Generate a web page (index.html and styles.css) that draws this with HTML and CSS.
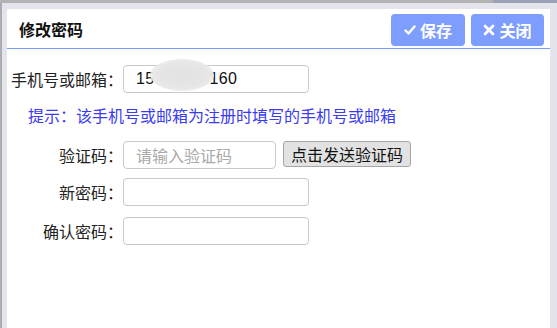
FILE: index.html
```html
<!DOCTYPE html>
<html lang="zh-CN">
<head>
<meta charset="utf-8">
<title>修改密码</title>
<link rel="stylesheet" href="styles.css">
</head>
<body>
<div class="topbar"><div class="tb-left"></div><div class="tb-right"></div></div>
<div class="frame">
  <div class="panel">
    <div class="header">
      <div class="title">修改密码</div>
      <div class="actions">
        <button class="btn"><svg class="ico" viewBox="0 0 12 12" width="12" height="12"><path d="M1.5 6.5 L4.5 9.5 L10.5 2.5" fill="none" stroke="#fff" stroke-width="2.4" stroke-linecap="round" stroke-linejoin="round"/></svg>保存</button>
        <button class="btn"><svg class="ico" viewBox="0 0 12 12" width="12" height="12"><path d="M2 2 L10 10 M10 2 L2 10" fill="none" stroke="#fff" stroke-width="2.8" stroke-linecap="round"/></svg>关闭</button>
      </div>
    </div>
    <div class="form">
      <div class="row">
        <label class="lbl">手机号或邮箱<span class="colon">：</span></label>
        <div class="field">
          <div class="input value">15<span class="mid">000000</span>160</div>
          <span class="blob"></span>
        </div>
      </div>
      <div class="hint">提示<span class="colon">：</span>该手机号或邮箱为注册时填写的手机号或邮箱</div>
      <div class="row r-code">
        <label class="lbl">验证码<span class="colon">：</span></label>
        <div class="input short placeholder">请输入验证码</div>
        <button class="send">点击发送验证码</button>
      </div>
      <div class="row r-new">
        <label class="lbl">新密码<span class="colon">：</span></label>
        <div class="input"></div>
      </div>
      <div class="row r-confirm">
        <label class="lbl">确认密码<span class="colon">：</span></label>
        <div class="input"></div>
      </div>
    </div>
  </div>
</div>
</body>
</html>
```
FILE: styles.css
```css
html, body {
  margin: 0;
  padding: 0;
}
body {
  width: 557px;
  height: 328px;
  overflow: hidden;
  background: #e4e4ec;
  font-family: "Liberation Sans", "Noto Sans CJK SC", sans-serif;
  color: #222;
}
.topbar {
  display: flex;
  height: 3px;
}
.tb-left {
  flex: 1;
  background: #b3b3b3;
}
.tb-right {
  width: 64px;
  background: #9ca1b6;
}
.frame {
  height: 325px;
  box-sizing: border-box;
  border-left: 2px solid #adadad;
  padding: 6px 7px 0 5px;
  display: flex;
}
.panel {
  flex: 1;
  background: #fff;
  display: flex;
  flex-direction: column;
}
.header {
  box-sizing: border-box;
  height: 40px;
  border-bottom: 1px solid #74a0ff;
  display: flex;
  justify-content: space-between;
  align-items: flex-start;
  padding: 5px 6px 0 12px;
}
.title {
  font-family: "Noto Sans CJK SC", sans-serif;
  font-weight: bold;
  font-size: 16px;
  line-height: 30px;
  color: #111;
}
.actions {
  display: flex;
  gap: 6px;
}
.btn {
  display: flex;
  align-items: center;
  justify-content: center;
  gap: 4px;
  height: 32px;
  width: 74px;
  border: none;
  border-radius: 4px;
  background: #7d9efe;
  color: #fff;
  font-family: "Noto Sans CJK SC", sans-serif;
  font-weight: bold;
  font-size: 16px;
  padding: 0;
}
.btn + .btn {
  width: 73px;
}
.ico {
  display: block;
}
.form {
  padding: 16px 0 0 1px;
  font-size: 16px;
}
.row {
  display: flex;
  align-items: center;
  height: 28px;
}
.lbl {
  width: 115px;
  text-align: right;
  font-family: "Noto Sans CJK SC", sans-serif;
  line-height: 28px;
}
.colon {
  font-family: "Noto Sans CJK TC", sans-serif;
}
.field {
  position: relative;
}
.input {
  width: 186px;
  height: 28px;
  box-sizing: border-box;
  border: 1px solid #c9c9c9;
  border-radius: 4px;
  padding-left: 12px;
  line-height: 26px;
  font-size: 16px;
  color: #111;
}
.value {
  letter-spacing: 0.3px;
}
.mid {
  color: #fff;
}
.blob {
  position: absolute;
  left: 27px;
  top: -6px;
  width: 64px;
  height: 32px;
  border-radius: 50%;
  background: radial-gradient(ellipse at center, #e2e2e2 0%, #e6e6e6 55%, rgba(236,236,236,0.85) 75%, rgba(255,255,255,0) 100%);
}
.short {
  width: 153px;
}
.placeholder {
  color: #a9a9a9;
  font-family: "Noto Sans CJK SC", sans-serif;
}
.hint {
  margin: 10px 0 14px 20px;
  line-height: 24px;
  color: #3b3bf0;
  font-family: "Noto Sans CJK SC", sans-serif;
}
.send {
  margin-left: 7px;
  width: 128px;
  height: 26px;
  box-sizing: border-box;
  border: 1px solid #a6a6a6;
  border-radius: 3px;
  background: #e2e2e2;
  font-family: "Noto Sans CJK SC", sans-serif;
  font-size: 16px;
  color: #111;
  padding: 0;
  line-height: 22px;
  align-self: flex-start;
}
.r-new {
  margin-top: 9px;
}
.r-confirm {
  margin-top: 11px;
}
```
